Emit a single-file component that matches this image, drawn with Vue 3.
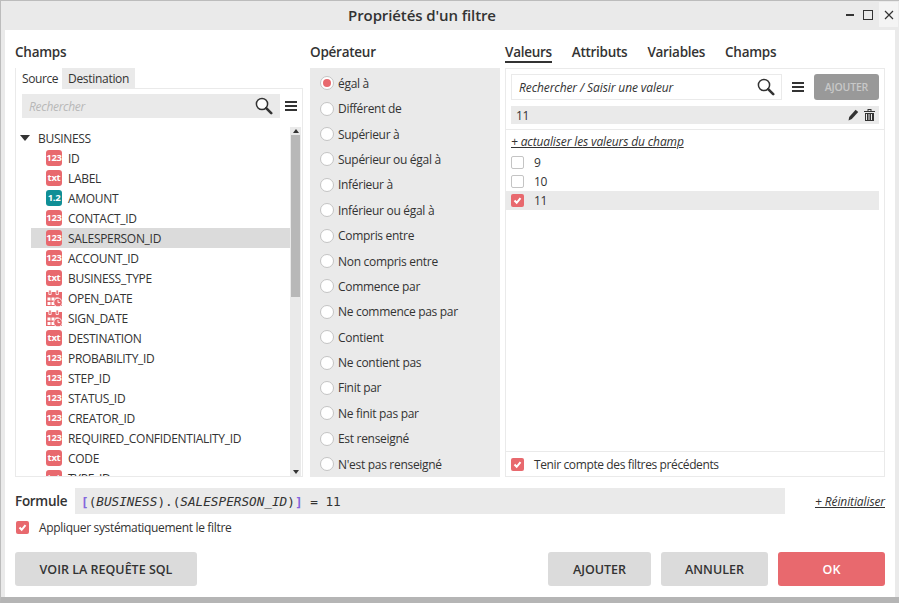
<script setup>
const fields = [
  ['int', 'ID'], ['txt', 'LABEL'], ['dec', 'AMOUNT'], ['int', 'CONTACT_ID'], ['int', 'SALESPERSON_ID'],
  ['int', 'ACCOUNT_ID'], ['txt', 'BUSINESS_TYPE'], ['date', 'OPEN_DATE'], ['date', 'SIGN_DATE'],
  ['txt', 'DESTINATION'], ['int', 'PROBABILITY_ID'], ['int', 'STEP_ID'], ['int', 'STATUS_ID'],
  ['int', 'CREATOR_ID'], ['int', 'REQUIRED_CONFIDENTIALITY_ID'], ['txt', 'CODE'], ['txt', 'TYPE_ID'],
]
const badge = { int: '123', txt: 'txt', dec: '1.2' }
const operators = [
  'égal à', 'Différent de', 'Supérieur à', 'Supérieur ou égal à', 'Inférieur à', 'Inférieur ou égal à',
  'Compris entre', 'Non compris entre', 'Commence par', 'Ne commence pas par', 'Contient',
  'Ne contient pas', 'Finit par', 'Ne finit pas par', 'Est renseigné', "N'est pas renseigné",
]
const values = [{ v: '9', on: false }, { v: '10', on: false }, { v: '11', on: true }]
</script>

<template>
  <div class="win">
    <header class="titlebar">
      <div class="title">Propriétés d'un filtre</div>
      <div class="controls">
        <span class="min"></span>
        <span class="max"></span>
        <span class="close">
          <svg width="10" height="10" viewBox="0 0 10 10"><path d="M1 1l8 8M9 1l-8 8" stroke="#333" stroke-width="1.2" fill="none" /></svg>
        </span>
      </div>
    </header>

    <main class="content">
      <div class="columns">
        <section class="col col-left">
          <h2 class="heading">Champs</h2>
          <div class="tabs">
            <span class="tab active">Source</span>
            <span class="tab">Destination</span>
          </div>
          <div class="panel tree-panel">
            <div class="search-row">
              <div class="search-grey">
                <span class="ph">Rechercher</span>
                <svg class="loupe" width="18" height="18" viewBox="0 0 18 18"><circle cx="7" cy="7" r="5.6" fill="#fff" stroke="#333" stroke-width="1.5" /><path d="M11.2 11.2l5 5" stroke="#333" stroke-width="2.6" stroke-linecap="round" /></svg>
              </div>
              <span class="burger"><i></i><i></i><i></i></span>
            </div>
            <div class="tree-body">
              <div class="tree">
                <div class="root"><span class="caret"></span>BUSINESS</div>
                <div v-for="f in fields" :key="f[1]" class="leaf" :class="{ selected: f[1] === 'SALESPERSON_ID' }">
                  <svg v-if="f[0] === 'date'" class="cal" width="16" height="17" viewBox="0 0 16 17">
                    <path d="M0 2h16v14H0zM1.500 7.500v3h3v-3zM5.500 7.500v3h3v-3zM9.500 7.500v3h3v-3zM1.500 12v3h3v-3zM5.500 12v3h3v-3z" fill="#e8696e" fill-rule="evenodd" />
                    <path d="M2.800 0h2.400v4.500H2.800zM10 0h2.400v4.500H10z" fill="#e8696e" stroke="#fff" stroke-width=".8" />
                    <circle cx="12" cy="12.500" r="4.300" fill="#e8696e" stroke="#fff" stroke-width=".8" />
                    <path d="M12 10v2.600h2.200" stroke="#fff" stroke-width=".9" fill="none" />
                  </svg>
                  <span v-else class="badge" :class="{ teal: f[0] === 'dec' }">{{ badge[f[0]] }}</span>
                  <span class="leaf-name">{{ f[1] }}</span>
                </div>
              </div>
              <div class="scrollbar">
                <span class="arrow up"></span>
                <span class="track"><span class="thumb"></span></span>
                <span class="arrow down"></span>
              </div>
            </div>
          </div>
        </section>

        <section class="col col-mid">
          <h2 class="heading">Opérateur</h2>
          <div class="ops">
            <label v-for="(o, i) in operators" :key="o" class="op">
              <span class="radio" :class="{ on: i === 0 }"></span>{{ o }}
            </label>
          </div>
        </section>

        <section class="col col-right">
          <nav class="rtabs">
            <span class="rtab active">Valeurs</span>
            <span class="rtab">Attributs</span>
            <span class="rtab">Variables</span>
            <span class="rtab">Champs</span>
          </nav>
          <div class="panel values-panel">
            <div class="values-head">
              <div class="input-row">
                <div class="input">
                  <span>Rechercher / Saisir une valeur</span>
                  <svg class="loupe" width="18" height="18" viewBox="0 0 18 18"><circle cx="7" cy="7" r="5.6" fill="#fff" stroke="#333" stroke-width="1.5" /><path d="M11.2 11.2l5 5" stroke="#333" stroke-width="2.600" stroke-linecap="round" /></svg>
                </div>
                <span class="burger"><i></i><i></i><i></i></span>
                <button class="add-mini">AJOUTER</button>
              </div>
              <div class="chip">
                <span>11</span>
                <span class="chip-icons">
                  <svg width="11" height="12" viewBox="0 0 11 12"><path d="M7.600.800l2.600 2.200-6.400 7-3.300 1.400.7-3.500z" fill="#333" /></svg>
                  <svg width="11" height="12" viewBox="0 0 11 12"><path d="M0 2h11v1H0zM3.500 0h4v2h-1V1h-2v1h-1zM1 4h9v8H1zM2 5v6h1V5zM4.500 5v6h1V5zM7 5v6h1V5zM9 5v6" fill="#333" fill-rule="evenodd" /></svg>
                </span>
              </div>
            </div>
            <div class="values-body">
              <a class="refresh">+ actualiser les valeurs du champ</a>
              <div class="val-list">
                <div v-for="x in values" :key="x.v" class="val" :class="{ on: x.on }">
                  <span class="check" :class="{ on: x.on }">
                    <svg v-if="x.on" width="13" height="13" viewBox="0 0 13 13"><path d="M3.500 6.500l2.200 2.300 3.800-4.600" stroke="#fff" stroke-width="2" fill="none" /></svg>
                  </span>
                  <span>{{ x.v }}</span>
                </div>
              </div>
            </div>
            <div class="values-foot">
              <span class="check on"><svg width="13" height="13" viewBox="0 0 13 13"><path d="M3.500 6.500l2.200 2.300 3.800-4.600" stroke="#fff" stroke-width="2" fill="none" /></svg></span>
              <span>Tenir compte des filtres précédents</span>
            </div>
          </div>
        </section>
      </div>

      <div class="formula-row">
        <span class="formula-label">Formule</span>
        <div class="formula"><b>[</b>(<em>BUSINESS</em>).(<em>SALESPERSON_ID</em>)<b>]</b> = 11</div>
        <a class="reset">+ Réinitialiser</a>
      </div>

      <div class="apply">
        <span class="check on"><svg width="13" height="13" viewBox="0 0 13 13"><path d="M3.500 6.500l2.200 2.300 3.800-4.600" stroke="#fff" stroke-width="2" fill="none" /></svg></span>
        <span>Appliquer systématiquement le filtre</span>
      </div>

      <div class="actions">
        <button class="btn sql">VOIR LA REQUÊTE SQL</button>
        <span class="spacer"></span>
        <button class="btn add">AJOUTER</button>
        <button class="btn cancel">ANNULER</button>
        <button class="btn ok">OK</button>
      </div>
    </main>
  </div>
</template>

<style scoped>
.win {
  width: 899px;
  height: 603px;
  box-sizing: border-box;
  display: flex;
  flex-direction: column;
  background: #eaeaea;
  border-top: 1px solid #bcbcbc;
  border-left: 1px solid #bcbcbc;
  border-bottom: 6px solid #b5b5b5;
  font-family: "Open Sans", "Noto Sans", sans-serif;
  font-size: 12px;
  letter-spacing: -0.3px;
  color: #333;
  overflow: hidden;
}
.titlebar {
  height: 29px;
  flex: none;
  display: flex;
  align-items: center;
}
.title {
  flex: 1;
  text-align: center;
  margin-left: 13px;
  font-size: 15px;
  font-weight: 600;
  color: #333;
  letter-spacing: -0.1px;
  padding-bottom: 2px;
}
.controls {
  width: 69px;
  height: 25px;
  display: flex;
  align-items: center;
  margin-top: 1px;
  align-self: flex-start;
  box-sizing: border-box;
  padding-left: 16px;
}
.min { width: 8px; height: 2px; background: #333; margin-right: 9px; }
.max { width: 8px; height: 8px; border: 1.500px solid #333; background: #eaeaea; margin-right: 6px; }
.close { width: 19px; height: 25px; background: #f4f4f4; display: flex; align-items: center; justify-content: center; }
.content {
  flex: 1;
  min-height: 0;
  margin: 0 4px 0 4px;
  background: #fff;
  padding: 14px 10px 0 10px;
  display: flex;
  flex-direction: column;
}
.columns {
  display: flex;
  height: 433px;
  flex: none;
}
.col { display: flex; flex-direction: column; min-width: 0; }
.col-left { width: 289px; margin-right: 6px; }
.col-mid { width: 190px; margin-right: 5px; }
.col-right { width: 380px; }
.heading {
  margin: 0;
  height: 24px;
  line-height: 17px;
  font-size: 13.500px;
  font-weight: 600;
  color: #333;
  letter-spacing: -0.25px;
  flex: none;
}
.tabs { display: flex; height: 20px; flex: none; position: relative; z-index: 1; }
.tab {
  line-height: 21px;
  padding: 0 6px;
  background: #eaeaea;
  width: 61px;
  text-align: center;
  box-sizing: content-box;
}
.tab.active {
  background: #fff;
  width: 34px;
  border-left: 1px solid #eaeaea;
  margin-bottom: -1px;
  letter-spacing: -0.4px;
}
.panel { border: 1px solid #eaeaea; box-sizing: border-box; }
.tree-panel {
  flex: 1;
  min-height: 0;
  width: 288px;
  display: flex;
  flex-direction: column;
}
.search-row {
  display: flex;
  align-items: center;
  padding: 5px 0 0 6px;
  flex: none;
}
.search-grey {
  width: 258px;
  height: 24px;
  background: #eaeaea;
  display: flex;
  align-items: center;
  justify-content: space-between;
  box-sizing: border-box;
  padding: 0 7px;
}
.ph { font-style: italic; color: #b8b8b8; }
.loupe { flex: none; }
.burger { width: 12px; display: flex; flex-direction: column; gap: 2px; margin-left: 5px; flex: none; }
.burger i { height: 2px; background: #333; display: block; }
.tree-body {
  flex: 1;
  min-height: 0;
  display: flex;
  margin-top: 9px;
  overflow: hidden;
}
.tree { flex: 1; min-width: 0; overflow: hidden; }
.root {
  height: 21px;
  box-sizing: border-box;
  padding-top: 1px;
  display: flex;
  align-items: center;
  padding-left: 4px;
}
.caret {
  width: 0;
  height: 0;
  border-left: 5px solid transparent;
  border-right: 5px solid transparent;
  border-top: 6px solid #333;
  margin-right: 8px;
}
.leaf {
  height: 20px;
  display: flex;
  align-items: center;
  margin-left: 15px;
  padding-left: 15px;
  width: 261px;
  box-sizing: border-box;
}
.leaf.selected { background: #dbdbdb; }
.badge {
  width: 16px;
  height: 16px;
  border-radius: 3px;
  background: #e8696e;
  color: #fff;
  font-size: 9.500px;
  font-weight: 700;
  line-height: 15px;
  text-align: center;
  letter-spacing: -0.3px;
  flex: none;
  overflow: hidden;
  white-space: nowrap;
}
.badge.teal { background: #0f8f96; }
.cal { flex: none; }
.leaf-name { margin-left: 6px; white-space: nowrap; }
.scrollbar {
  width: 11px;
  margin-right: 1px;
  background: #eaeaea;
  display: flex;
  flex-direction: column;
  flex: none;
}
.arrow { height: 8px; flex: none; display: flex; align-items: center; justify-content: center; }
.arrow::before {
  content: "";
  border-left: 3.500px solid transparent;
  border-right: 3.500px solid transparent;
}
.arrow.up::before { border-bottom: 4px solid #333; }
.arrow.down::before { border-top: 4px solid #333; }
.track { flex: 1; display: block; padding: 0 1px; }
.thumb { display: block; height: 162px; background: #b8b8b8; }
.ops {
  flex: 1;
  min-height: 0;
  background: #eaeaea;
  display: flex;
  flex-direction: column;
  padding-top: 2.600px;
}
.op {
  height: 25.400px;
  display: flex;
  align-items: center;
  padding-left: 10px;
  flex: none;
}
.radio {
  width: 14px;
  height: 14px;
  border-radius: 50%;
  box-sizing: border-box;
  border: 1px solid #c4c4c4;
  background: #fff;
  margin-right: 4px;
  flex: none;
  display: flex;
  align-items: center;
  justify-content: center;
}
.radio.on::before {
  content: "";
  width: 8px;
  height: 8px;
  border-radius: 50%;
  background: #e8696e;
}
.rtabs { display: flex; gap: 20px; height: 24px; flex: none; }
.rtab {
  font-size: 13.500px;
  font-weight: 600;
  line-height: 17px;
  height: 17px;
  letter-spacing: -0.28px;
}
.rtab.active { border-bottom: 2px solid #333; }
.values-panel { flex: 1; min-height: 0; display: flex; flex-direction: column; }
.values-head {
  padding: 5px;
  border-bottom: 1px solid #eaeaea;
  flex: none;
}
.input-row { display: flex; align-items: center; height: 26px; }
.input {
  width: 271px;
  height: 26px;
  box-sizing: border-box;
  border: 1px solid #eaeaea;
  display: flex;
  align-items: center;
  justify-content: space-between;
  padding: 0 6px 0 7px;
  font-style: italic;
  letter-spacing: -0.1px;
}
.input-row .burger { margin-left: 10px; }
.add-mini {
  width: 65px;
  height: 26px;
  margin-left: 10px;
  border: 0;
  border-radius: 3px;
  background: #999;
  color: #c8c8c8;
  font: 600 10.500px "Open Sans", sans-serif;
  letter-spacing: -0.2px;
  padding: 0;
}
.chip {
  margin-top: 6px;
  height: 18px;
  background: #eaeaea;
  display: flex;
  align-items: center;
  justify-content: space-between;
  padding: 0 4px 0 5px;
}
.chip-icons { display: flex; gap: 5px; }
.values-body { flex: 1; min-height: 0; }
.refresh {
  display: block;
  font-style: italic;
  text-decoration: underline;
  padding-left: 5px;
  margin-top: 3px;
  line-height: 17px;
  letter-spacing: -0.13px;
}
.val-list { margin-top: 3px; }
.val {
  height: 19px;
  width: 373px;
  display: flex;
  align-items: center;
  padding-left: 5px;
  box-sizing: border-box;
}
.val.on { background: #eaeaea; }
.check {
  width: 13px;
  height: 13px;
  border-radius: 2px;
  box-sizing: border-box;
  border: 1px solid #c4c4c4;
  background: #fff;
  margin-right: 10px;
  flex: none;
  display: block;
}
.check.on { background: #e8696e; border: 0; }
.values-foot {
  height: 25px;
  flex: none;
  border-top: 1px solid #eaeaea;
  display: flex;
  align-items: center;
  padding-left: 5px;
  box-sizing: border-box;
  letter-spacing: -0.38px;
}
.formula-row {
  display: flex;
  align-items: center;
  height: 26px;
  margin-top: 11px;
  flex: none;
}
.formula-label {
  width: 60px;
  font-size: 13.500px;
  font-weight: 600;
  letter-spacing: -0.3px;
  flex: none;
}
.formula {
  width: 710px;
  height: 26px;
  line-height: 28px;
  background: #eaeaea;
  padding-left: 6px;
  box-sizing: border-box;
  font-family: "DejaVu Sans Mono", monospace;
  font-size: 12.700px;
  letter-spacing: 0;
  flex: none;
  white-space: pre;
}
.formula b { color: #8466dd; font-weight: 700; }
.formula em { font-style: italic; }
.reset {
  margin-left: auto;
  font-style: italic;
  text-decoration: underline;
  white-space: nowrap;
  letter-spacing: -0.1px;
}
.apply {
  display: flex;
  align-items: center;
  height: 13px;
  margin-top: 7px;
  padding-left: 1px;
  flex: none;
  letter-spacing: -0.33px;
}
.actions {
  display: flex;
  margin-top: 18px;
  gap: 10px;
  flex: none;
}
.spacer { flex: 1; }
.btn {
  height: 34px;
  border: 0;
  border-radius: 3px;
  background: #dbdbdb;
  color: #333;
  font: 600 12.500px "Open Sans", sans-serif;
  letter-spacing: 0;
  padding: 0;
}
.sql { width: 182px; }
.add { width: 103px; }
.cancel { width: 107px; }
.ok { width: 107px; background: #e8696e; color: #fff; }
</style>
